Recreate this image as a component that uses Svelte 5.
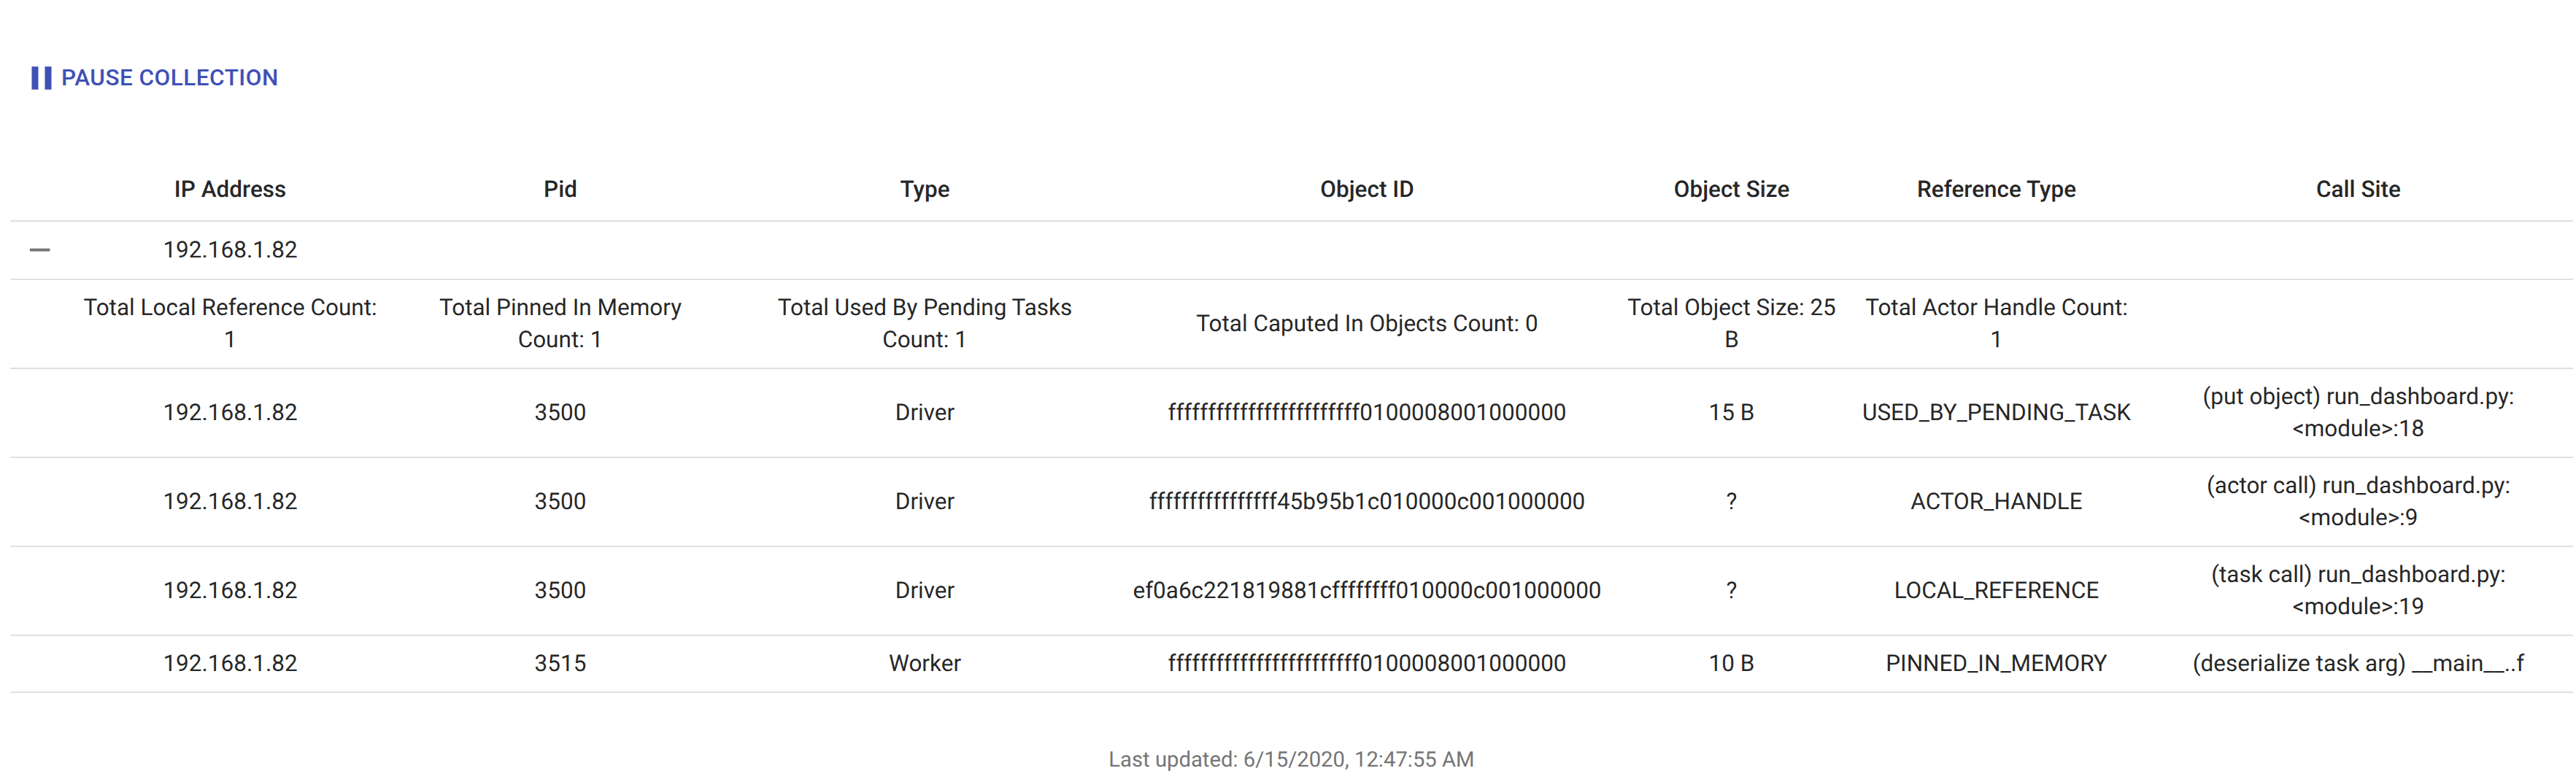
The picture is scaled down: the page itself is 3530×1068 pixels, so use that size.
<script>
  const columns = ['IP Address', 'Pid', 'Type', 'Object ID', 'Object Size', 'Reference Type', 'Call Site'];
  const summary = [
    'Total Local Reference Count: 1',
    'Total Pinned In Memory Count: 1',
    'Total Used By Pending Tasks Count: 1',
    'Total Caputed In Objects Count: 0',
    'Total Object Size: 25 B',
    'Total Actor Handle Count: 1',
    ''
  ];
  const rows = [
    ['192.168.1.82', '3500', 'Driver', 'ffffffffffffffffffffffff0100008001000000', '15 B', 'USED_BY_PENDING_TASK', '(put object) run_dashboard.py:<module>:18'],
    ['192.168.1.82', '3500', 'Driver', 'ffffffffffffffff45b95b1c010000c001000000', '?', 'ACTOR_HANDLE', '(actor call) run_dashboard.py:<module>:9'],
    ['192.168.1.82', '3500', 'Driver', 'ef0a6c221819881cffffffff010000c001000000', '?', 'LOCAL_REFERENCE', '(task call) run_dashboard.py:<module>:19'],
    ['192.168.1.82', '3515', 'Worker', 'ffffffffffffffffffffffff0100008001000000', '10 B', 'PINNED_IN_MEMORY', '(deserialize task arg) __main__..f']
  ];
</script>

<div class="page">
  <button class="pause" type="button">
    <svg class="pause-icon" viewBox="0 0 24 24" aria-hidden="true"><path d="M6 19h4V5H6v14zm8-14v14h4V5h-4z" /></svg>
    <span>Pause Collection</span>
  </button>

  <table>
    <colgroup>
      <col class="c0" /><col class="c1" /><col class="c2" /><col class="c3" /><col class="c4" /><col class="c5" /><col class="c6" /><col class="c7" />
    </colgroup>
    <thead>
      <tr>
        <th></th>
        {#each columns as c}<th>{c}</th>{/each}
      </tr>
    </thead>
    <tbody>
      <tr>
        <td class="expand">
          <svg class="minus" viewBox="0 0 24 24" aria-hidden="true"><path d="M19 13H5v-2h14v2z" /></svg>
        </td>
        <td>192.168.1.82</td>
        <td></td><td></td><td></td><td></td><td></td><td></td>
      </tr>
      <tr>
        <td></td>
        {#each summary as s}<td>{s}</td>{/each}
      </tr>
      {#each rows as r}
        <tr>
          <td></td>
          {#each r as v}<td>{v}</td>{/each}
        </tr>
      {/each}
    </tbody>
  </table>

  <p class="updated">Last updated: 6/15/2020, 12:47:55 AM</p>
</div>

<style>
  :global(body) {
    margin: 0;
    background: #fff;
  }
  .page {
    font-family: Roboto, "Liberation Sans", sans-serif;
    font-size: 31.5px;
    line-height: 44px;
    color: rgba(0, 0, 0, 0.87);
    text-rendering: geometricPrecision;
    padding: 80px 4px 0 14px;
  }
  .pause {
    display: flex;
    align-items: center;
    margin: 0 0 0 16px;
    padding: 0;
    border: 0;
    background: none;
    font: inherit;
    font-weight: 500;
    line-height: 54px;
    color: #3f51b5;
    text-transform: uppercase;
    letter-spacing: 0.48px;
  }
  .pause-icon {
    width: 54px;
    height: 54px;
    fill: currentColor;
  }
  table {
    width: 3512px;
    table-layout: fixed;
    border-collapse: separate;
    border-spacing: 0;
    margin-top: 82px;
  }
  .c0 { width: 81px; }
  .c1 { width: 441px; }
  .c2 { width: 464px; }
  .c3 { width: 535px; }
  .c4 { width: 677px; }
  .c5 { width: 322px; }
  .c6 { width: 404px; }
  .c7 { width: 588px; }
  th, td {
    padding: 16px 14px;
    text-align: center;
    vertical-align: middle;
    border-bottom: 2px solid #e0e0e0;
    overflow-wrap: anywhere;
  }
  td:nth-child(3), td:nth-child(4) {
    padding-inline: 18px;
  }
  th {
    padding: 22px 14px 20px;
    font-weight: 500;
  }
  .expand {
    padding: 16px 0;
    text-align: left;
    line-height: 0;
  }
  .minus {
    display: block;
    width: 47.25px;
    height: 47.25px;
    margin: -0.6px 0 -0.65px 17.2px;
    fill: #757575;
  }
  .updated {
    margin: 69.5px 0 0;
    font-size: 29.25px;
    text-align: center;
    color: #757575;
  }
</style>
